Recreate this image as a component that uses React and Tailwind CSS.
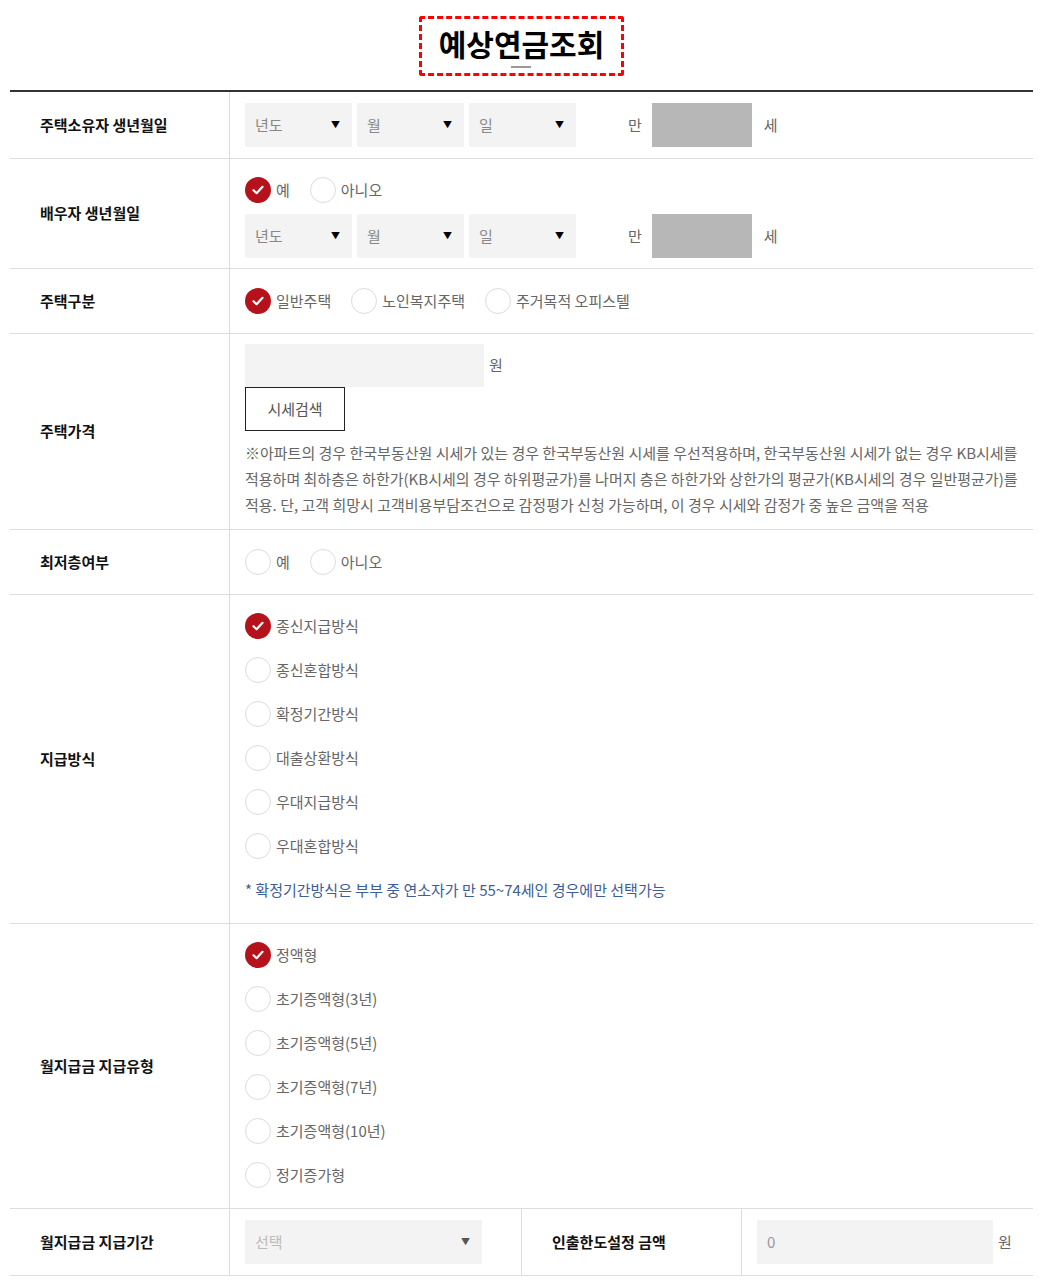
import { useState } from 'react'

const FONT = '"Noto Sans CJK KR", "Noto Sans", sans-serif'

function Radio({ checked, label, onClick }) {
  return (
    <button type="button" onClick={onClick} className="flex items-center gap-[5px] text-[15px] text-[#666]">
      {checked ? (
        <span className="w-[26px] h-[26px] rounded-full bg-[#b5121b] flex items-center justify-center">
          <svg width="14" height="14" viewBox="0 0 14 14" fill="none">
            <path d="M2.5 7.2 L5.6 10.2 L11.5 3.8" stroke="#fff" strokeWidth="2.2" strokeLinecap="round" strokeLinejoin="round" />
          </svg>
        </span>
      ) : (
        <span className="w-[26px] h-[26px] rounded-full bg-white border border-[#dcdcdc]" />
      )}
      <span>{label}</span>
    </button>
  )
}

function RadioGroup({ options, value, onChange, vertical }) {
  return (
    <div className={vertical ? 'flex flex-col' : 'flex items-center gap-5 h-[30px]'}>
      {options.map((o, i) => (
        <div key={o} className={vertical ? 'h-11 flex items-center' : ''}>
          <Radio checked={value === i} label={o} onClick={() => onChange(i)} />
        </div>
      ))}
    </div>
  )
}

function Select({ label, width = 'w-[107px]', muted }) {
  return (
    <div className={`${width} h-11 bg-[#f3f3f3] flex items-center justify-between pl-[10px] pr-[12px] text-[15px]`}>
      <span className={muted ? 'text-[#bbb]' : 'text-[#888]'}>{label}</span>
      <span className={`text-[9px] ${muted ? 'text-[#555]' : 'text-black'}`}>▼</span>
    </div>
  )
}

function BirthRow() {
  return (
    <div className="flex items-center">
      <div className="flex gap-[5px]">
        <Select label="년도" />
        <Select label="월" />
        <Select label="일" />
      </div>
      <span className="ml-[52px] text-[15px] text-[#666]">만</span>
      <div className="ml-[10px] w-[100px] h-11 bg-[#b7b7b7]" />
      <span className="ml-[12px] text-[15px] text-[#666]">세</span>
    </div>
  )
}

function Row({ label, children, className = '' }) {
  return (
    <div className="flex border-b border-[#dddddd]">
      <div className="w-[220px] shrink-0 border-r border-[#dddddd] flex items-center pl-[30px] text-[15px] font-bold text-[#111]">
        {label}
      </div>
      <div className={`flex-1 pl-[15px] ${className}`}>{children}</div>
    </div>
  )
}

export default function App() {
  const [spouse, setSpouse] = useState(0)
  const [houseType, setHouseType] = useState(0)
  const [lowest, setLowest] = useState(-1)
  const [payMethod, setPayMethod] = useState(0)
  const [payType, setPayType] = useState(0)

  return (
    <div className="w-[1048px] bg-white pl-[10px] pr-[15px] pb-[9px]" style={{ fontFamily: FONT }}>
      {/* Title */}
      <div className="flex justify-center pt-[16px] pb-[14px]">
        <div className="relative h-[60px] px-[17px] pb-[6px] flex items-center border-[3px] border-dashed border-[#ff0000] rounded-[3px]">
          <h2 className="text-[30px] font-bold text-black leading-none">예상연금조회</h2>
          <span className="absolute bottom-[5px] left-1/2 -translate-x-1/2 w-5 h-[2px] bg-[#999]" />
        </div>
      </div>

      <div className="border-t-2 border-[#333]">
        <Row label="주택소유자 생년월일" className="py-[11px]">
          <BirthRow />
        </Row>

        <Row label="배우자 생년월일" className="pt-[16px] pb-[10px]">
          <RadioGroup options={['예', '아니오']} value={spouse} onChange={setSpouse} />
          <div className="mt-[9px]">
            <BirthRow />
          </div>
        </Row>

        <Row label="주택구분" className="py-[17px]">
          <RadioGroup options={['일반주택', '노인복지주택', '주거목적 오피스텔']} value={houseType} onChange={setHouseType} />
        </Row>

        <Row label="주택가격" className="pt-[10px] pb-[11px]">
          <div className="flex items-center">
            <div className="w-[239px] h-[43px] bg-[#f3f3f3]" />
            <span className="ml-[5px] text-[15px] text-[#666]">원</span>
          </div>
          <button type="button" className="w-[100px] h-[44px] border border-[#222] text-[15px] text-[#555] bg-white">시세검색</button>
          <p className="mt-[9px] pr-[10px] text-[15px] leading-[26px] text-[#666]">
            ※아파트의 경우 한국부동산원 시세가 있는 경우 한국부동산원 시세를 우선적용하며, 한국부동산원 시세가 없는 경우 KB시세를 적용하며 최하층은 하한가(KB시세의 경우 하위평균가)를 나머지 층은 하한가와 상한가의 평균가(KB시세의 경우 일반평균가)를 적용. 단, 고객 희망시 고객비용부담조건으로 감정평가 신청 가능하며, 이 경우 시세와 감정가 중 높은 금액을 적용
          </p>
        </Row>

        <Row label="최저층여부" className="py-[17px]">
          <RadioGroup options={['예', '아니오']} value={lowest} onChange={setLowest} />
        </Row>

        <Row label="지급방식" className="pt-[9px] pb-[20px]">
          <RadioGroup
            vertical
            options={['종신지급방식', '종신혼합방식', '확정기간방식', '대출상환방식', '우대지급방식', '우대혼합방식']}
            value={payMethod}
            onChange={setPayMethod}
          />
          <p className="mt-[9px] text-[15px] leading-[26px] text-[#3d5c9c]">
            * 확정기간방식은 부부 중 연소자가 만 55~74세인 경우에만 선택가능
          </p>
        </Row>

        <Row label="월지급금 지급유형" className="pt-[9px] pb-[11px]">
          <RadioGroup
            vertical
            options={['정액형', '초기증액형(3년)', '초기증액형(5년)', '초기증액형(7년)', '초기증액형(10년)', '정기증가형']}
            value={payType}
            onChange={setPayType}
          />
        </Row>

        <div className="flex border-b border-[#dddddd]">
          <div className="w-[220px] shrink-0 border-r border-[#dddddd] flex items-center pl-[30px] text-[15px] font-bold text-[#111]">
            월지급금 지급기간
          </div>
          <div className="w-[292px] shrink-0 pl-[15px] py-[11px] border-r border-[#dddddd]">
            <Select label="선택" width="w-[237px]" muted />
          </div>
          <div className="w-[220px] shrink-0 border-r border-[#dddddd] flex items-center pl-[30px] text-[15px] font-bold text-[#111]">
            인출한도설정 금액
          </div>
          <div className="flex-1 pl-[15px] py-[11px] flex items-center">
            <div className="w-[236px] h-11 bg-[#f3f3f3] flex items-center pl-[10px] text-[15px] text-[#999]">0</div>
            <span className="ml-[5px] text-[15px] text-[#666]">원</span>
          </div>
        </div>
      </div>
    </div>
  )
}
